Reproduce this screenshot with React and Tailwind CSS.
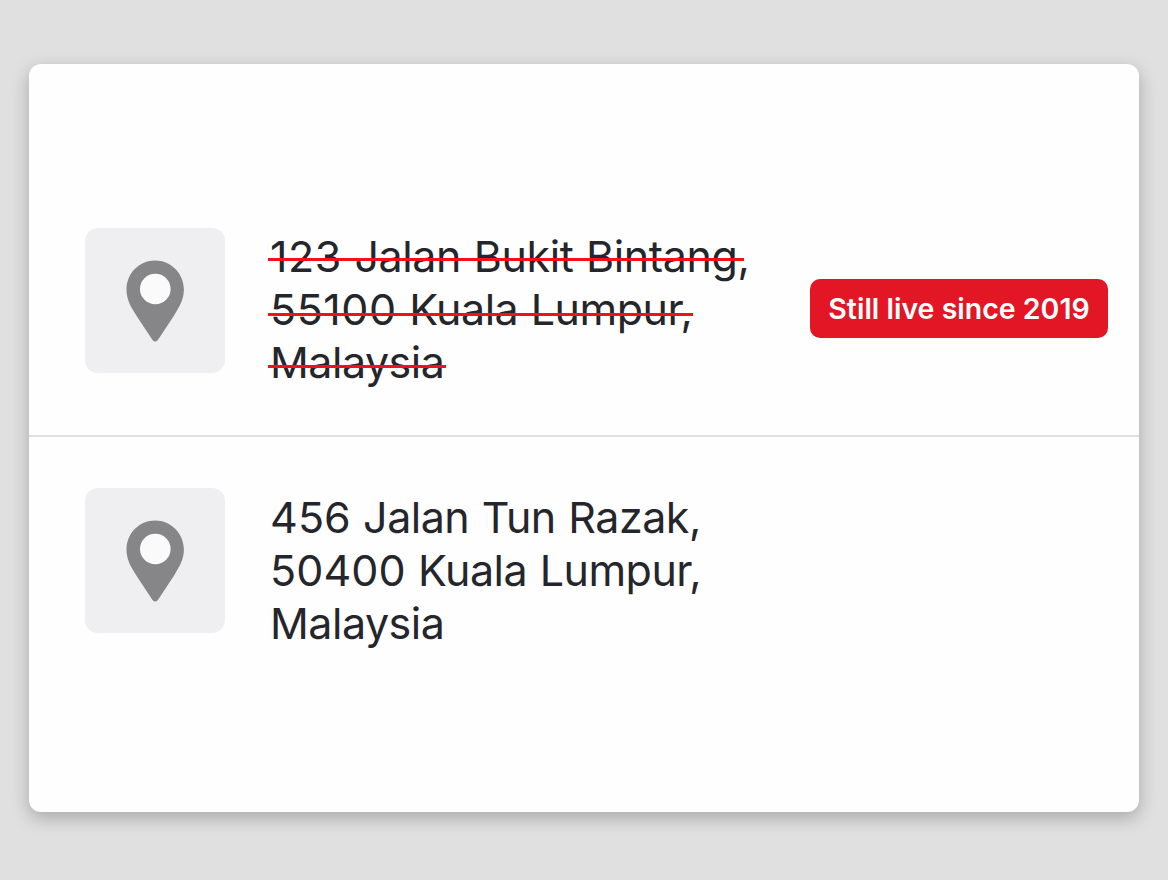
const addresses = [
  {
    id: 1,
    textClass: "pt-[2px]",
    numberClass: "tracking-[0.5px]",
    lines: [
      { number: "123", text: "Jalan Bukit Bintang,", className: "tracking-[-0.4px]", strike: "top-[28px] w-[476px]" },
      { number: "55100", text: "Kuala Lumpur,", strike: "top-[30px] w-[425px]" },
      { text: "Malaysia", strike: "top-[29px] w-[178px]" },
    ],
    badge: "Still live since 2019",
  },
  {
    id: 2,
    textClass: "pt-[3px]",
    numberClass: "tracking-[0.1px]",
    lines: [
      { number: "456", text: "Jalan Tun Razak," },
      { number: "50400", text: "Kuala Lumpur," },
      { text: "Malaysia" },
    ],
  },
];

function PinTile() {
  return (
    <div className="flex h-[145px] w-[140px] shrink-0 justify-center rounded-[13px] bg-[#efeff1] pt-8">
      <svg viewBox="0 0 58 82" className="h-[82px] w-[58px] fill-[#868688]">
        <path d="M29.2 0.5C13 0.5 0.5 13.5 0.5 29.5C0.5 40 5 47 10 55L26.5 80Q29.2 83 31.9 80L48.4 55C53 47 57.9 40 57.9 29.5C57.9 13.5 45 0.5 29.2 0.5Z" />
        <circle cx="29.3" cy="29" r="15.3" className="fill-[#fafafa]" />
      </svg>
    </div>
  );
}

function AddressRow({ address }) {
  return (
    <div className="flex">
      <PinTile />
      <div
        className={`ml-[45px] text-[43px] leading-[53px] tracking-[-0.5px] whitespace-nowrap text-[#25262b] [word-spacing:1px] ${address.textClass}`}
      >
        {address.lines.map((line) => (
          <p key={line.text} className={`relative w-fit ${line.className || ""}`}>
            {line.number && (
              <span className={`[word-spacing:0px] ${address.numberClass}`}>{line.number} </span>
            )}
            {line.text}
            {line.strike && (
              <span className={`absolute -left-[2px] h-[3px] bg-[#f01219] ${line.strike}`} />
            )}
          </p>
        ))}
      </div>
      {address.badge && (
        <span className="mt-[51px] mr-[31px] ml-auto flex h-[59px] w-[298px] items-center justify-center rounded-[10px] bg-[#e21624] pt-[2px] text-[28.5px] font-semibold whitespace-nowrap text-white">
          {address.badge}
        </span>
      )}
    </div>
  );
}

export default function App() {
  return (
    <div className="h-[880px] bg-[#e0e0e0] px-[29px] pt-16 font-['Inter',sans-serif]">
      <div className="h-[748px] w-[1110px] rounded-xl bg-[#fefefe] shadow-[0_6px_18px_rgba(0,0,0,0.25)]">
        <div className="h-[373px] border-b-2 border-[#dfdfe1] pt-[164px] pl-14">
          <AddressRow address={addresses[0]} />
        </div>
        <div className="pt-[51px] pl-14">
          <AddressRow address={addresses[1]} />
        </div>
      </div>
    </div>
  );
}
